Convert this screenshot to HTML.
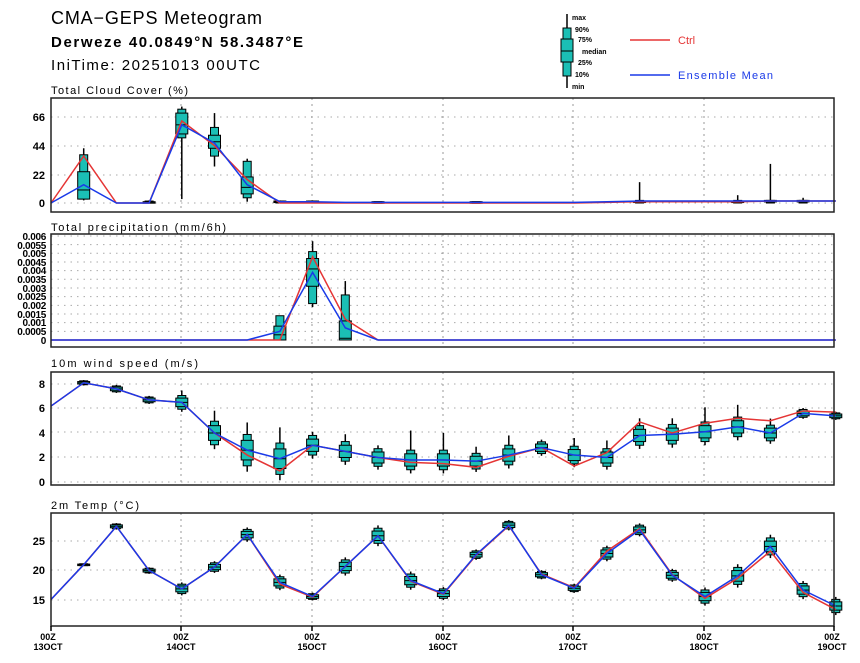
<!DOCTYPE html>
<html><head><meta charset="utf-8"><style>
html,body{margin:0;padding:0;background:#fff;width:860px;height:663px;overflow:hidden}
svg{display:block;font-family:"Liberation Sans","DejaVu Sans",sans-serif}
</style></head><body>
<svg id="s" width="860" height="663" xmlns="http://www.w3.org/2000/svg">
<text x="51" y="24" font-size="18" textLength="211" lengthAdjust="spacing">CMA−GEPS Meteogram</text>
<text x="51" y="47" font-size="15" font-weight="bold" textLength="252" lengthAdjust="spacing">Derweze 40.0849°N 58.3487°E</text>
<text x="51" y="70" font-size="15" textLength="209" lengthAdjust="spacing">IniTime: 20251013 00UTC</text>
<text x="51" y="94" font-size="11" textLength="137" lengthAdjust="spacing">Total Cloud Cover (%)</text>
<text x="51" y="231" font-size="11" textLength="175" lengthAdjust="spacing">Total precipitation (mm/6h)</text>
<text x="51" y="367" font-size="11" textLength="147" lengthAdjust="spacing">10m wind speed (m/s)</text>
<text x="51" y="509" font-size="11" textLength="88" lengthAdjust="spacing">2m Temp (°C)</text>
<g font-size="11" font-weight="bold" text-anchor="end">
<text x="45" y="121">66</text><text x="45" y="150">44</text><text x="45" y="179">22</text><text x="45" y="207">0</text>
<text x="45" y="388">8</text><text x="45" y="412">6</text><text x="45" y="437">4</text><text x="45" y="461">2</text><text x="45" y="486">0</text>
<text x="45" y="545">25</text><text x="45" y="574">20</text><text x="45" y="604">15</text>
</g>
<g font-size="10" font-weight="bold" text-anchor="end" letter-spacing="-0.3">
<text x="46" y="240">0.006</text><text x="46" y="249">0.0055</text><text x="46" y="257">0.005</text><text x="46" y="266">0.0045</text><text x="46" y="274">0.004</text><text x="46" y="283">0.0035</text><text x="46" y="292">0.003</text><text x="46" y="300">0.0025</text><text x="46" y="309">0.002</text><text x="46" y="318">0.0015</text><text x="46" y="326">0.001</text><text x="46" y="335">0.0005</text><text x="46" y="344">0</text>
</g>
<g font-size="9" font-weight="bold" text-anchor="middle">
<text x="48" y="640">00Z</text><text x="48" y="650">13OCT</text>
<text x="181" y="640">00Z</text><text x="181" y="650">14OCT</text>
<text x="312" y="640">00Z</text><text x="312" y="650">15OCT</text>
<text x="443" y="640">00Z</text><text x="443" y="650">16OCT</text>
<text x="573" y="640">00Z</text><text x="573" y="650">17OCT</text>
<text x="704" y="640">00Z</text><text x="704" y="650">18OCT</text>
<text x="832" y="640">00Z</text><text x="832" y="650">19OCT</text>
</g>
<g font-size="7" font-weight="bold">
<text x="572" y="20">max</text><text x="575" y="32">90%</text><text x="578" y="42">75%</text><text x="582" y="54">median</text><text x="578" y="65">25%</text><text x="575" y="77">10%</text><text x="572" y="89">min</text>
</g>
<line x1="567" y1="14" x2="567" y2="88" stroke="#000" stroke-width="1.5"/>
<rect x="563" y="28" width="8" height="48" fill="#1bbfb5" stroke="#000"/>
<rect x="561" y="39" width="12" height="23" fill="#1bbfb5" stroke="#000"/>
<line x1="561" y1="51" x2="573" y2="51" stroke="#000"/>
<line x1="630" y1="40" x2="670" y2="40" stroke="#e53535" stroke-width="1.5"/>
<text x="678" y="44" font-size="11" fill="#e53535">Ctrl</text>
<line x1="630" y1="75" x2="670" y2="75" stroke="#1a3ae8" stroke-width="1.5"/>
<text x="678" y="79" font-size="11" fill="#1a3ae8" textLength="95" lengthAdjust="spacing">Ensemble Mean</text>
<g id="g"></g>
</svg>
<script>
var NS="http://www.w3.org/2000/svg",G=document.getElementById('g');
function el(t,a){var e=document.createElementNS(NS,t);for(var k in a)e.setAttribute(k,a[k]);G.appendChild(e);return e;}
function X(i){return 51+32.7*i;}
var panels=[[98,212,[117,146,175,203]],[234,347,[]],[372,485,[384,408,432,457,482]],[513,626,[541,570,600]]];
var pg=[];for(var k=0;k<13;k++)pg.push(340-k*8.67);panels[1][2]=pg;
panels.forEach(function(p){
 p[2].forEach(function(y){el('line',{x1:51,x2:834,y1:y,y2:y,stroke:'#aaa','stroke-dasharray':'1.5 5','stroke-width':1});});
 [181,312,443,573,704].forEach(function(x){el('line',{x1:x,x2:x,y1:p[0],y2:p[1],stroke:'#999','stroke-dasharray':'2 4','stroke-width':1});});
});
function box(i,v,f){
 var x=X(i),y=v.map(f);
 el('line',{x1:x,x2:x,y1:y[0],y2:y[6],stroke:'#000','stroke-width':1.5});
 el('rect',{x:x-4,y:Math.min(y[1],y[5]),width:8,height:Math.max(1.5,Math.abs(y[1]-y[5])),fill:'#1bbfb5',stroke:'#000','stroke-width':1});
 el('rect',{x:x-6,y:Math.min(y[2],y[4]),width:12,height:Math.max(1.5,Math.abs(y[2]-y[4])),fill:'#1bbfb5',stroke:'#000','stroke-width':1});
 el('line',{x1:x-6,x2:x+6,y1:y[3],y2:y[3],stroke:'#000','stroke-width':1});
}
function line(vals,f,c){el('polyline',{points:vals.map(function(v,i){return X(i)+','+f(v);}).join(' '),fill:'none',stroke:c,'stroke-width':1.5});}
function sp(m,s){return [m-2.2*s,m-1.6*s,m-s,m,m+s,m+1.6*s,m+2.2*s];}
var fc=function(v){return 203-1.303*v;};
[[1,[2,3,3,10,24,37,42]],[3,[0,0,0,0.5,1,1.5,2]],[4,[3,50,53,60,69,72,74]],[5,[28,36,42,47,52,58,69]],[6,[1,4,7,12,20,32,34]],[7,[0,0,0.5,1,1.5,1.5,2]],[8,[0,0,0.5,1,1.5,1.5,2]],[10,[0,0,0.3,0.5,1,1,1]],[13,[0,0,0.3,0.5,1,1,1]],[18,[0,0,0.5,1,1.5,2,16]],[21,[0,0,0.5,1,1.5,2,6]],[22,[0,0,1,1,2,2,30]],[23,[0,0,1,1,2,2,4]]].forEach(function(b){box(b[0],b[1],fc);});
line([0,36,0,0,63,44,18,0,0,0,0,0,0,0,0,0,0,0.5,1,1,1,1,1.5,1.5,1.5],fc,'#e53535');
line([0,14,0,0,60,46,14,1,1,0.5,0.5,0.5,0.5,0.5,0.5,0.5,0.5,1,1.5,1.5,1.5,1.5,1.5,1.5,1.5],fc,'#1a3ae8');
var fp=function(v){return 340-v/0.006*104;};
box(7,[0,0,0,0.0003,0.0008,0.0014,0.0014],fp);
box(8,[0.0019,0.0021,0.0031,0.0041,0.0047,0.0051,0.0057],fp);
box(9,[0,0,0,0.0001,0.0011,0.0026,0.0034],fp);
var cp=[],mp=[];for(var i=0;i<25;i++){cp.push(0);mp.push(0);}
cp[8]=0.0048;cp[9]=0.0012;mp[7]=0.0005;mp[8]=0.0039;mp[9]=0.0007;
line(cp,fp,'#e53535');line(mp,fp,'#1a3ae8');
var fw=function(v){return 482-12.25*v;};
var wc=[6.2,8.1,7.6,6.7,6.5,4.0,2.2,0.9,3.0,2.5,2.0,1.6,1.5,1.2,2.1,2.8,1.3,2.4,4.9,4.0,4.8,5.2,5.0,5.8,5.7];
var wm=[6.2,8.1,7.6,6.7,6.5,4.0,2.6,1.9,3.0,2.5,2.0,1.8,1.8,1.7,2.2,2.8,2.2,2.0,3.8,3.9,4.1,4.5,4.0,5.6,5.4];
var ws=[0.1,0.1,0.15,0.15,0.35,0.6,0.8,0.8,0.5,0.5,0.45,0.5,0.5,0.4,0.5,0.3,0.45,0.45,0.5,0.5,0.5,0.5,0.4,0.2,0.15];
var wx=[0,0,0,0,0.2,0.5,0.5,0.8,0,0.3,0,1.3,1.1,0.3,0.5,0,0.4,0.4,0.3,0.2,0.9,0.7,0.3,0,0];
for(var i=1;i<25;i++){var b=sp(wm[i],ws[i]);b[6]+=wx[i];box(i,b,fw);}
line(wc,fw,'#e53535');line(wm,fw,'#1a3ae8');
var ft=function(v){return 570-5.9*(v-20);};
var tc=[15,20.9,27.4,19.9,16.8,20.5,26,17.6,15.4,20.6,25.8,18.1,15.9,22.5,27.5,19.3,17,23.2,27,19.2,15.2,18.6,23.2,16.2,13.3];
var tm=[15,20.9,27.4,19.9,16.8,20.5,26,17.9,15.5,20.6,25.8,18.2,16,22.6,27.6,19.2,16.9,22.8,26.8,19.1,15.5,19.0,24,16.6,13.9];
var tsd=[0.1,0.1,0.25,0.25,0.5,0.45,0.55,0.6,0.3,0.7,0.8,0.7,0.5,0.4,0.4,0.35,0.35,0.6,0.5,0.5,0.7,0.9,0.9,0.7,0.7];
for(var i=1;i<25;i++){box(i,sp(tm[i],tsd[i]),ft);}
line(tc,ft,'#e53535');line(tm,ft,'#1a3ae8');
panels.forEach(function(p){el('rect',{x:51,y:p[0],width:783,height:p[1]-p[0],fill:'none',stroke:'#222','stroke-width':1.5});});
[51,181,312,443,573,704,834].forEach(function(x){el('line',{x1:x,x2:x,y1:626,y2:631,stroke:'#000','stroke-width':1.5});});
</script>
</body></html>
